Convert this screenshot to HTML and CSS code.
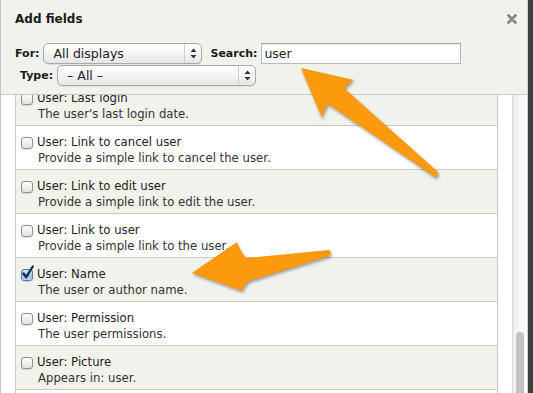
FILE: index.html
```html
<!DOCTYPE html>
<html>
<head>
<meta charset="utf-8">
<link rel="stylesheet" href="styles.css">
</head>
<body>
<div class="page">
  <div class="dialog">
    <div class="header">
      <div class="title">Add fields</div>
      <svg class="close" width="10" height="10" viewBox="0 0 10 10"><path d="M1.5 1.5 L8.5 8.5 M8.5 1.5 L1.5 8.5" stroke="#858585" stroke-width="2.8" stroke-linecap="round"/></svg>
      <div class="ctl-row">
        <span class="lbl">For:</span>
        <div class="select sel-for">
          <span class="sel-text">All displays</span>
          <span class="sel-arrows"><svg width="7" height="11" viewBox="0 0 7 11"><path d="M3.5 0.5 L6.5 4 L0.5 4 Z M3.5 10.5 L6.5 7 L0.5 7 Z" fill="#333"/></svg></span>
        </div>
        <span class="lbl lbl-search">Search:</span>
        <div class="input">user</div>
      </div>
      <div class="ctl-row ctl-row2">
        <span class="lbl">Type:</span>
        <div class="select sel-type">
          <span class="sel-text">– All –</span>
          <span class="sel-arrows"><svg width="7" height="11" viewBox="0 0 7 11"><path d="M3.5 0.5 L6.5 4 L0.5 4 Z M3.5 10.5 L6.5 7 L0.5 7 Z" fill="#333"/></svg></span>
        </div>
      </div>
    </div>
    <div class="body">
      <div class="list">
        <div class="item odd first">
          <div class="item-title"><span class="cb"></span>User: Last login</div>
          <div class="item-desc">The user's last login date.</div>
        </div>
        <div class="item">
          <div class="item-title"><span class="cb"></span>User: Link to cancel user</div>
          <div class="item-desc">Provide a simple link to cancel the user.</div>
        </div>
        <div class="item odd">
          <div class="item-title"><span class="cb"></span>User: Link to edit user</div>
          <div class="item-desc">Provide a simple link to edit the user.</div>
        </div>
        <div class="item">
          <div class="item-title"><span class="cb"></span>User: Link to user</div>
          <div class="item-desc">Provide a simple link to the user.</div>
        </div>
        <div class="item odd">
          <div class="item-title"><span class="cb cb-checked"><svg class="tick" width="14" height="16" viewBox="0 0 14 16"><path d="M2.5 8.5 L5.2 12.2 L11.8 1.5" fill="none" stroke="#1c2b4a" stroke-width="2.3" stroke-linecap="round" stroke-linejoin="round"/></svg></span>User: Name</div>
          <div class="item-desc">The user or author name.</div>
        </div>
        <div class="item">
          <div class="item-title"><span class="cb"></span>User: Permission</div>
          <div class="item-desc">The user permissions.</div>
        </div>
        <div class="item odd">
          <div class="item-title"><span class="cb"></span>User: Picture</div>
          <div class="item-desc">Appears in: user.</div>
        </div>
        <div class="item"></div>
      </div>
      <div class="scroll"><div class="thumb"></div></div>
    </div>
  </div>
  <svg class="arrows" width="533" height="393" viewBox="0 0 533 393">
    <path d="M301 68 L354 80 Q347 84 345 89 L437 171 Q440 175 435 177 L328 104 Q324 110 322 118 Z" fill="#fa9a0c"/>
    <path d="M192 273 L237 242 Q240 251 246 258 L329 250 Q333 252 329 256 L249 281 Q244 285 242 291 Z" fill="#fa9a0c"/>
  </svg>
</div>
</body>
</html>
```

FILE: styles.css
```css
html, body {
  margin: 0;
  padding: 0;
}
body {
  background: #3f3f3f;
  width: 533px;
  height: 393px;
  overflow: hidden;
  font-family: "DejaVu Sans", "Liberation Sans", sans-serif;
  color: #222;
}
.page {
  position: relative;
  width: 533px;
  height: 393px;
}
.dialog {
  width: 526px;
  height: 393px;
  border-left: 1px solid #c4c4c4;
  border-right: 1px solid #d4d4d4;
  background: #fff;
  display: flex;
  flex-direction: column;
  overflow: hidden;
}
.header {
  position: relative;
  box-sizing: border-box;
  height: 95px;
  flex: none;
  background: #f2f2ec;
  border-bottom: 1px solid #c9c9c9;
  padding: 11px 0 0 14px;
}
.title {
  font-weight: bold;
  font-size: 12px;
  line-height: 16px;
  color: #1a1a1a;
}
.close {
  position: absolute;
  top: 14px;
  right: 10px;
}
.ctl-row {
  display: flex;
  align-items: center;
  height: 21px;
  margin-top: 16px;
}
.ctl-row2 {
  margin-top: 1px;
  padding-left: 5px;
}
.lbl {
  font-weight: bold;
  font-size: 11px;
  color: #1a1a1a;
  margin-right: 4px;
}
.lbl-search {
  margin-left: 8px;
  margin-right: 4px;
}
.select {
  box-sizing: border-box;
  height: 21px;
  border: 1px solid #a9a9a9;
  border-radius: 5px;
  background: linear-gradient(#ffffff, #f4f4f4 50%, #e6e6e6);
  display: flex;
  align-items: center;
  font-size: 12.5px;
  color: #222;
  box-shadow: 0 1px 0 rgba(0,0,0,0.06);
}
.sel-for {
  width: 159px;
}
.sel-type {
  width: 199px;
}
.sel-text {
  flex: 1;
  padding-left: 9px;
  white-space: nowrap;
}
.sel-arrows {
  width: 16px;
  height: 19px;
  border-left: 1px solid #cfcfcf;
  display: flex;
  align-items: center;
  justify-content: center;
}
.sel-arrows svg {
  display: block;
}
.input {
  box-sizing: border-box;
  width: 200px;
  height: 21px;
  border: 1px solid #b8b8b8;
  border-top-color: #a8a8a8;
  background: #fff;
  box-shadow: inset 0 1px 1px rgba(0,0,0,0.08);
  font-size: 12.5px;
  line-height: 19px;
  padding-left: 2px;
  color: #222;
}
.body {
  flex: 1;
  display: flex;
  padding-left: 14px;
  overflow: hidden;
}
.list {
  width: 481px;
  flex: none;
  border-left: 1px solid #c9c9c9;
  border-right: 1px solid #c9c9c9;
  margin-right: 14px;
  margin-top: -13px;
  align-self: flex-start;
}
.item {
  box-sizing: border-box;
  height: 44px;
  border-bottom: 1px solid #c9c9c9;
  background: #fff;
  padding: 8px 0 0 5px;
  font-size: 11.7px;
  line-height: 16px;
  color: #1e1e1e;
}
.item.odd {
  background: #f2f2ec;
}
.item-title {
  display: flex;
  align-items: center;
  white-space: nowrap;
}
.item-desc {
  padding-left: 17px;
  color: #333;
  white-space: nowrap;
}
.cb {
  position: relative;
  box-sizing: border-box;
  width: 12px;
  height: 12px;
  margin-right: 4px;
  margin-top: 2px;
  border: 1px solid #8f8f8f;
  border-radius: 3px;
  background: linear-gradient(#fdfdfd, #ececec 60%, #e2e2e2);
  box-shadow: 0 1px 1px rgba(0,0,0,0.12);
  flex: none;
}
.cb-checked {
  background: linear-gradient(#d4e4f6, #9fc0e8 55%, #b8d3f2);
  border-color: #5a79a8;
}
.tick {
  position: absolute;
  left: -1px;
  top: -5px;
}
.scroll {
  width: 14px;
  flex: none;
  border-left: 1px solid #dadada;
  background: linear-gradient(90deg, #ececec, #f8f8f8 40%, #fdfdfd);
  padding-top: 237px;
  padding-left: 3px;
  box-sizing: content-box;
}
.thumb {
  width: 8px;
  height: 80px;
  background: #c2c2c2;
  border-radius: 4px;
}
.arrows {
  position: absolute;
  left: 0;
  top: 0;
  filter: drop-shadow(1px 2px 1.5px rgba(0,0,0,0.35));
  pointer-events: none;
}
```
